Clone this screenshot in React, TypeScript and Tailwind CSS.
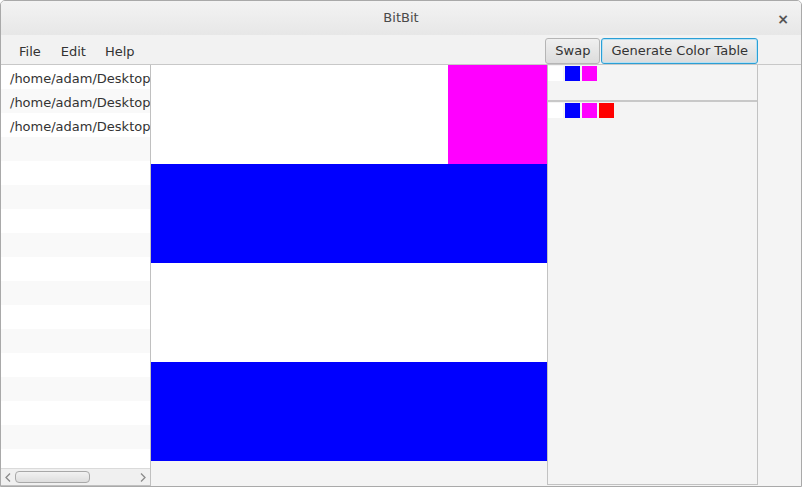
import React from "react";

const W = "#ffffff";
const B = "#0000ff";
const M = "#ff00ff";
const R = "#ff0000";

const grid = [
  [W, W, W, M],
  [B, B, B, B],
  [W, W, W, W],
  [B, B, B, B],
];

function Swatches({ colors }: { colors: string[] }) {
  return (
    <div className="flex gap-[2px]">
      {colors.map((c, i) => (
        <div key={i} className="w-[15px] h-[15px]" style={{ background: c }} />
      ))}
    </div>
  );
}

export default function App() {
  const rows = Array.from({ length: 17 });
  return (
    <div
      className="w-[802px] h-[487px] overflow-hidden bg-[#f4f4f4] border border-[#a9a9a9] rounded-t-[5px] flex flex-col text-[#333]"
      style={{ fontFamily: '"DejaVu Sans", "Open Sans", sans-serif' }}
    >
      {/* Title bar */}
      <div className="h-[34px] shrink-0 relative flex items-center justify-center bg-gradient-to-b from-[#f3f3f3] to-[#e7e7e7]">
        <span className="text-[13px] text-[#4a4a4a]">BitBit</span>
        <span className="absolute right-[12px] top-[8px] text-[14px] font-bold text-[#555]">×</span>
      </div>
      {/* Menu bar */}
      <div className="h-[29px] shrink-0 flex items-start bg-[#f2f2f2]">
        <div className="flex items-center h-[29px] pt-[4px] text-[13px] text-[#333]">
          <span className="ml-[18px]">File</span>
          <span className="ml-[20px]">Edit</span>
          <span className="ml-[19px]">Help</span>
        </div>
        <div className="ml-auto mr-[43px] mt-[3px] flex">
          <div className="h-[26px] px-[9px] flex items-center border border-[#b5b5b5] rounded-[3px] bg-gradient-to-b from-[#f0f0f0] to-[#dcdcdc] text-[13px]">
            Swap
          </div>
          <div className="h-[26px] ml-[1px] px-[9px] flex items-center border border-[#2a9fd6] rounded-[3px] bg-gradient-to-b from-[#f0f0f0] to-[#dcdcdc] text-[13px] shadow-[inset_0_0_0_1px_#b8e0f2]">
            Generate Color Table
          </div>
        </div>
      </div>
      {/* Body */}
      <div className="flex flex-1 min-h-0 border-t border-[#c8c8c8]">
        {/* List */}
        <div className="w-[150px] shrink-0 flex flex-col border-r border-b border-[#c0c0c0]">
          <div className="flex-1 overflow-hidden">
            {rows.map((_, i) => (
              <div
                key={i}
                className={`h-[24px] flex items-center pl-[9px] pt-[3px] text-[13px] whitespace-nowrap overflow-hidden ${
                  i % 2 === 0 ? "bg-white" : "bg-[#f9f9f9]"
                }`}
              >
                {i < 3 ? "/home/adam/Desktop" : ""}
              </div>
            ))}
          </div>
          {/* Scrollbar */}
          <div className="h-[17px] shrink-0 flex items-center bg-[#f0f0f0] border-t border-[#dadada]">
            <span className="w-[14px] flex justify-center">
              <svg width="6" height="9" viewBox="0 0 6 9">
                <path d="M5 0.5 L1 4.5 L5 8.5" fill="none" stroke="#8a8a8a" strokeWidth="1.3" />
              </svg>
            </span>
            <div className="w-[75px] h-[12px] rounded-[4px] border border-[#a8a8a8] bg-gradient-to-b from-[#f2f2f2] to-[#dedede]" />
            <span className="ml-auto w-[14px] flex justify-center">
              <svg width="6" height="9" viewBox="0 0 6 9">
                <path d="M1 0.5 L5 4.5 L1 8.5" fill="none" stroke="#8a8a8a" strokeWidth="1.3" />
              </svg>
            </span>
          </div>
        </div>
        {/* Canvas */}
        <div className="w-[396px] shrink-0 flex flex-col">
          <div className="grid grid-cols-[repeat(4,99px)] grid-rows-[repeat(4,99px)]">
            {grid.flat().map((c, i) => (
              <div key={i} style={{ background: c }} />
            ))}
          </div>
        </div>
        {/* Right panel */}
        <div className="w-[211px] shrink-0 flex flex-col border-l border-r border-b border-[#c2c2c2] bg-[#f4f4f4] mb-[1px]">
          <div className="h-[35px] pt-[1px]">
            <Swatches colors={[W, B, M]} />
          </div>
          <div className="h-[2px] bg-[#c8c8c8]" />
          <div className="pt-[1px]">
            <Swatches colors={[W, B, M, R]} />
          </div>
        </div>
        <div className="flex-1" />
      </div>
    </div>
  );
}
